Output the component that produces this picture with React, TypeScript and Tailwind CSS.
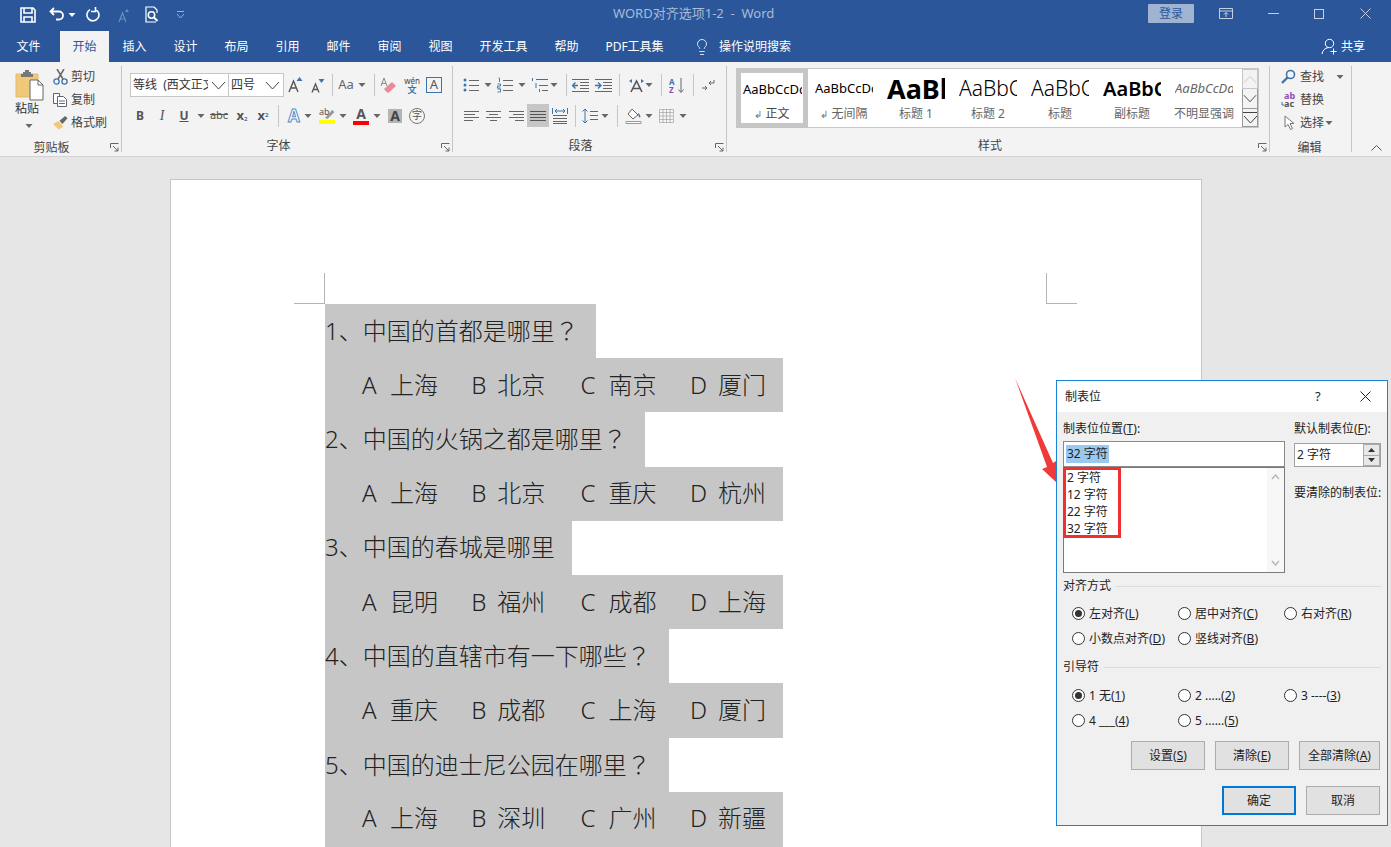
import React from 'react';
import { Lightbulb } from 'lucide-react';

const tabs = [
  ['文件', 'w-[60px]'],
  ['开始', 'w-[49px]'],
  ['插入', 'w-[51px]'],
  ['设计', 'w-[51px]'],
  ['布局', 'w-[51px]'],
  ['引用', 'w-[51px]'],
  ['邮件', 'w-[51px]'],
  ['审阅', 'w-[51px]'],
  ['视图', 'w-[51px]'],
  ['开发工具', 'w-[75px]'],
  ['帮助', 'w-[51px]'],
  ['PDF工具集', 'w-[85px]'],
];

const questions = [
  { q: '1、中国的首都是哪里', mark: true, w: 'w-[271px]', opts: ['上海', '北京', '南京', '厦门'] },
  { q: '2、中国的火锅之都是哪里', mark: true, w: 'w-[320px]', opts: ['上海', '北京', '重庆', '杭州'] },
  { q: '3、中国的春城是哪里', mark: false, w: 'w-[247px]', opts: ['昆明', '福州', '成都', '上海'] },
  { q: '4、中国的直辖市有一下哪些', mark: true, w: 'w-[344px]', opts: ['重庆', '成都', '上海', '厦门'] },
  { q: '5、中国的迪士尼公园在哪里', mark: true, w: 'w-[344px]', opts: ['上海', '深圳', '广州', '新疆'] },
];

const optionLetters = [
  ['A', 'w-[28px]'],
  ['B', 'w-[26px]'],
  ['C', 'w-[28px]'],
  ['D', 'w-[28px]'],
];

const styles = [
  { name: '无间隔', mark: true, cls: 'text-[13px] text-black', sample: 'AaBbCcDd' },
  { name: '标题 1', cls: 'text-[27px] font-bold text-black', sample: 'AaBbC' },
  { name: '标题 2', cls: 'text-[21px] font-light text-black', sample: 'AaBbCc' },
  { name: '标题', cls: 'text-[21px] font-light text-black', sample: 'AaBbCc' },
  { name: '副标题', cls: 'text-[20px] font-semibold text-black', sample: 'AaBbCc' },
  { name: '不明显强调', cls: 'text-[13px] italic text-[#666]', sample: 'AaBbCcDd' },
];

const Caret = ({ className = '' }: { className?: string }) => (
  <svg width="8" height="4" viewBox="0 0 8 4" className={`shrink-0 ${className}`}>
    <path d="M0.5 0h7L4 4z" fill="#666" />
  </svg>
);

const Sep = ({ className = '' }: { className?: string }) => (
  <div className={`w-px h-[22px] bg-[#c6c6c6] shrink-0 ${className}`} />
);

const Launcher = () => (
  <svg width="9" height="9" viewBox="0 0 9 9" className="absolute right-[2px] bottom-[0px]">
    <path d="M0.5 5V0.5H8.5M3 3l5 5M8 4.5V8H4.5" fill="none" stroke="#666" />
  </svg>
);

const Chevron = ({ up = false, className = '' }: { up?: boolean; className?: string }) => (
  <svg width="15" height="9" viewBox="0 0 15 9" className={className}>
    <path d={up ? 'M1 8l6.5-7 6.5 7' : 'M1 1l6.5 7 6.5-7'} fill="none" stroke="currentColor" />
  </svg>
);

// paragraph lines, each [x1, x2, y]
const Lines = ({ rows, color = '#666' }: { rows: number[][]; color?: string }) => (
  <svg width="20" height="16" viewBox="0 0 20 16">
    {rows.map((r, i) => (
      <path key={i} d={`M${r[0]} ${r[2]}.5H${r[1]}`} stroke={color} />
    ))}
  </svg>
);

const Cell = ({ className = 'w-[20px]', children }: { className?: string; children?: React.ReactNode }) => (
  <div className={`h-full flex items-center justify-center shrink-0 ${className}`}>{children}</div>
);

const Radio = ({ on, label, cls }: { on?: boolean; label: React.ReactNode; cls: string }) => (
  <div className={`flex items-center ${cls}`}>
    <div className="w-[13px] h-[13px] rounded-full border border-[#333] bg-white flex items-center justify-center shrink-0">
      {on && <div className="w-[7px] h-[7px] rounded-full bg-[#333]" />}
    </div>
    <span className="ml-[4px] whitespace-nowrap">{label}</span>
  </div>
);

const DlgButton = ({ cls, children }: { cls: string; children: React.ReactNode }) => (
  <div className={`h-[29px] border border-[#adadad] bg-[#e1e1e1] flex items-center justify-center ${cls}`}>{children}</div>
);

const U = ({ children }: { children: React.ReactNode }) => <span className="underline">{children}</span>;

const ToolText = ({ children }: { children: React.ReactNode }) => (
  <span className="text-[12px] text-[#444] whitespace-nowrap">{children}</span>
);

export default function App() {
  return (
    <div className="relative w-full h-screen overflow-hidden flex flex-col bg-[#e6e6e6] text-[12px] [font-family:'Noto_Sans','Noto_Sans_CJK_SC',sans-serif]">
      {/* title bar */}
      <div className="h-[31px] bg-[#2b579a] flex items-center shrink-0 text-white pb-[2px]">
        <div className="flex items-center pl-[20px] w-[613px]">
          <svg width="16" height="16" viewBox="0 0 16 16">
            <path d="M1 1h12l2 2v12H1z" fill="none" stroke="#fff" strokeWidth="1.6" />
            <path d="M4 1v5h8V1M4 15v-5h8v5" fill="none" stroke="#fff" strokeWidth="1.6" />
          </svg>
          <svg width="17" height="15" viewBox="0 0 17 15" className="ml-[13px]">
            <path d="M5 1L1.5 4.5 5 8M2 4.5h8a4 4 0 0 1 0 8H7" fill="none" stroke="#fff" strokeWidth="1.8" />
          </svg>
          <Caret className="ml-[2px] [&>path]:fill-white" />
          <svg width="15" height="15" viewBox="0 0 15 15" className="ml-[10px]">
            <path d="M9 2.2A6 6 0 1 1 4 2.6M9.5 0v4.5H5" fill="none" stroke="#fff" strokeWidth="1.6" />
          </svg>
          <svg width="11" height="14" viewBox="0 0 11 14" className="ml-[17px] mt-[2px]">
            <path d="M1 13L4.5 4 8 13M2.2 10h4.6" fill="none" stroke="#6f8dbb" strokeWidth="1.2" />
            <path d="M7 3h4L9 0z" fill="#6f8dbb" />
          </svg>
          <svg width="15" height="17" viewBox="0 0 15 17" className="ml-[15px]">
            <path d="M10 1H2v15h10M10 1l3 3v3" fill="none" stroke="#fff" strokeWidth="1.2" />
            <circle cx="7.5" cy="9" r="3.2" fill="none" stroke="#fff" strokeWidth="1.5" />
            <path d="M10 11.5l3.5 3.5" stroke="#fff" strokeWidth="2" />
          </svg>
          <svg width="9" height="8" viewBox="0 0 9 8" className="ml-[17px]">
            <path d="M1 .5h7M1 3l3.5 4L8 3" fill="none" stroke="#9db2d2" />
          </svg>
        </div>
        <span className="text-[13px] text-[#a9bbd6] whitespace-pre mb-[2px]">WORD对齐选项1-2  -  Word</span>
        <div className="ml-auto flex items-center h-full mb-[2px]">
          <div className="w-[46px] h-[19px] bg-[#a0b4d1] rounded-[1px] text-[#2b579a] text-[12px] flex items-center justify-center">登录</div>
          <svg width="14" height="11" viewBox="0 0 14 11" className="ml-[25px]">
            <path d="M.5.5h13v10H.5zM.5 3h13M7 9V4.5M5 6.5l2-2 2 2" fill="none" stroke="#c4d0e3" />
          </svg>
          <div className="ml-[35px] w-[11px] h-px bg-[#c4d0e3]" />
          <div className="ml-[35px] w-[10px] h-[10px] border border-[#c4d0e3]" />
          <svg width="11" height="11" viewBox="0 0 11 11" className="ml-[36px] mr-[20px]">
            <path d="M.5.5l10 10M10.5.5l-10 10" stroke="#c4d0e3" />
          </svg>
        </div>
      </div>

      {/* tabs */}
      <div className="h-[31px] bg-[#2b579a] flex items-stretch shrink-0 text-white text-[12px]">
        {tabs.map(([label, w]) => (
          <div
            key={label}
            className={`${w} flex items-center justify-center ${label === '开始' ? 'bg-[#f3f3f3] text-[#2b579a]' : ''} ${label === '文件' ? 'pr-[3px]' : ''}`}
          >
            {label}
          </div>
        ))}
        <div className="flex items-center ml-[16px] text-white">
          <Lightbulb size={18} strokeWidth={1.1} />
          <span className="ml-[8px]">操作说明搜索</span>
        </div>
        <div className="ml-auto flex items-center pr-[26px]">
          <svg width="17" height="17" viewBox="0 0 17 17">
            <circle cx="8.5" cy="5.5" r="4.2" fill="none" stroke="#fff" />
            <path d="M1 16c.5-3.5 3-6 6-6.4" fill="none" stroke="#fff" />
            <path d="M12.5 10.5v6M9.5 13.5h6" stroke="#fff" />
          </svg>
          <span className="ml-[3px]">共享</span>
        </div>
      </div>

      {/* ribbon */}
      <div className="h-[95px] bg-[#f3f3f3] border-b border-[#d2d2d2] flex shrink-0 py-[4px] text-[#444]">
        {/* clipboard */}
        <div className="relative w-[122px] shrink-0 border-r border-[#c6c6c6] flex flex-col">
          <div className="flex-1 flex">
            <div className="w-[53px] flex flex-col items-start pt-[4px] pl-[15px]">
              <svg width="29" height="31" viewBox="0 0 29 31">
                <path d="M1 4h22v23H1z" fill="#f0c87a" stroke="#e5bb6c" />
                <path d="M8 4V2h2V0h4v2h2v2h2v3H6V4z" fill="#777" />
                <path d="M15 10h8l5 5v15H15z" fill="#fff" stroke="#666" />
                <path d="M23 10v5h5" fill="none" stroke="#666" />
              </svg>
              <span className="text-[12px] text-[#333] leading-[16px]">粘贴</span>
              <Caret className="mt-[7px] ml-[10px]" />
            </div>
            <div className="flex flex-col -mt-[1px]">
              {[
                ['剪切', <svg key="s" width="15" height="16" viewBox="0 0 15 16"><circle cx="3.5" cy="12.5" r="2.6" fill="none" stroke="#3e74ad" strokeWidth="1.3" /><circle cx="11.5" cy="12.5" r="2.6" fill="none" stroke="#3e74ad" strokeWidth="1.3" /><path d="M5 10L11 0M10 10L4 0" stroke="#666" strokeWidth="1.5" /></svg>],
                ['复制', <svg key="c" width="15" height="15" viewBox="0 0 15 15"><path d="M.5 1.5h6v10h-6z" fill="#fff" stroke="#666" /><path d="M4.5 4.5h6l3 3v7h-9z" fill="#fff" stroke="#666" /><path d="M6 9h6M6 11.5h6" stroke="#3e74ad" /></svg>],
                ['格式刷', <svg key="f" width="16" height="15" viewBox="0 0 16 15"><path d="M0 9l6-3 5 6-5 3z" fill="#f0c87a" /><path d="M7 5.5l6-5 2.5 2.5-5.5 6z" fill="#666" /></svg>],
              ].map(([label, icon], i) => (
                <div key={i} className="h-[23px] flex items-center">
                  <Cell className="w-[15px]">{icon}</Cell>
                  <span className="ml-[3px] text-[#444] whitespace-nowrap">{label}</span>
                </div>
              ))}
            </div>
          </div>
          <div className="h-[20px] leading-[28px] text-center pr-[18px] text-[#444]">剪贴板</div>
          <Launcher />
        </div>

        {/* font */}
        <div className="relative w-[331px] shrink-0 border-r border-[#c6c6c6] flex flex-col">
          <div className="flex-1 pl-[8px] pt-[7px]">
            <div className="h-[24px] flex items-center">
              <div className="w-[99px] h-full bg-white border border-[#c6c6c6] flex items-center pl-[2px] overflow-hidden">
                <span className="w-[75px] overflow-hidden whitespace-pre text-[#333]">等线  (西文正文)</span>
                <Chevron className="ml-[3px] text-[#444] shrink-0" />
              </div>
              <div className="w-[55px] h-full bg-white border border-l-0 border-[#c6c6c6] flex items-center pl-[2px]">
                <span className="text-[#333]">四号</span>
                <Chevron className="ml-[10px] text-[#444]" />
              </div>
              <Cell className="w-[22px] ml-[1px]">
                <svg width="16" height="16" viewBox="0 0 16 16"><path d="M1 15L5.5 4 10 15M2.8 11h5.4" fill="none" stroke="#555" strokeWidth="1.4" /><path d="M8.5 4h6L11.5 0z" fill="#3e74ad" /></svg>
              </Cell>
              <Cell className="w-[22px]">
                <svg width="14" height="15" viewBox="0 0 14 15"><path d="M1 14.5L4.5 6 8 14.5M2.3 11.5h4.4" fill="none" stroke="#555" strokeWidth="1.3" /><path d="M7.5 1h6l-3 4z" fill="#3e74ad" /></svg>
              </Cell>
              <Sep className="ml-[3px]" />
              <Cell className="w-[20px] ml-[3px]"><span className="text-[13px] text-[#666]">Aa</span></Cell>
              <Caret className="ml-[2px]" />
              <Sep className="ml-[8px]" />
              <Cell className="w-[20px] ml-[3px]">
                <svg width="17" height="17" viewBox="0 0 17 17"><path d="M1 9l3-8 3 8M2 6.5h4" fill="none" stroke="#888" /><path d="M4 12l8-7 4 4-7 6.5H7z" fill="#ea8a97" /></svg>
              </Cell>
              <Cell className="w-[22px] ml-[3px] flex-col leading-none">
                <span className="text-[8px] text-[#444] leading-[9px]">wén</span>
                <span className="text-[9px] font-bold text-[#3e74ad] leading-[10px]">文</span>
              </Cell>
              <Cell className="w-[20px] ml-[1px]">
                <span className="w-[16px] h-[16px] border border-[#3e74ad] flex items-center justify-center text-[13px] text-[#555]">A</span>
              </Cell>
            </div>
            <div className="h-[23px] mt-[7px] flex items-center text-[#555]">
              <Cell className="w-[20px]"><b className="text-[12px]">B</b></Cell>
              <Cell className="w-[20px] ml-[2px]"><i className="text-[14px] [font-family:'Liberation_Serif',serif]">I</i></Cell>
              <Cell className="w-[20px] ml-[2px]"><b className="text-[12px] underline">U</b></Cell>
              <Caret className="ml-[3px]" />
              <Cell className="w-[20px] ml-[4px]"><span className="text-[11px] line-through">abc</span></Cell>
              <Cell className="w-[20px] ml-[3px]"><b className="text-[13px]">x<sub className="text-[6px] text-[#3e74ad]">2</sub></b></Cell>
              <Cell className="w-[20px] ml-[1px]"><b className="text-[13px]">x<sup className="text-[6px] text-[#3e74ad]">2</sup></b></Cell>
              <Sep className="ml-[5px]" />
              <Cell className="w-[20px] ml-[5px]"><b className="text-[17px] text-[#f7fbff] [-webkit-text-stroke:1px_#5b8fc7]">A</b></Cell>
              <Caret />
              <Cell className="w-[20px] ml-[5px] flex-col">
                <svg width="16" height="17" viewBox="0 0 16 17"><text x="0" y="8" fontSize="9" fill="#555">ab</text><path d="M6 11l7-8 2.5 2-7 7z" fill="#999" /><path d="M0 13h16v4H0z" fill="#ffff00" /></svg>
              </Cell>
              <Caret className="ml-[2px]" />
              <Cell className="w-[20px] ml-[4px] flex-col leading-none">
                <b className="text-[14px] text-[#555] leading-[13px]">A</b>
                <span className="w-[16px] h-[4px] bg-[#ff0000] mt-[1px]" />
              </Cell>
              <Caret className="ml-[2px]" />
              <Cell className="w-[20px] ml-[4px]">
                <span className="w-[14px] h-[14px] bg-[#b4b4b4] flex items-center justify-center text-[14px] font-bold text-[#444]">A</span>
              </Cell>
              <Cell className="w-[20px] ml-[2px]">
                <span className="w-[16px] h-[16px] rounded-full border border-[#777] flex items-center justify-center text-[10px] text-[#555]">字</span>
              </Cell>
            </div>
          </div>
          <div className="h-[20px] leading-[28px] text-center pr-[17px]">字体</div>
          <Launcher />
        </div>

        {/* paragraph */}
        <div className="relative w-[274px] shrink-0 border-r border-[#c6c6c6] flex flex-col">
          <div className="flex-1 pl-[8px] pt-[7px]">
            <div className="h-[24px] flex items-center">
              <Cell>
                <svg width="16" height="16" viewBox="0 0 16 16"><path d="M6 3.5h10M6 8.5h10M6 13.5h10" stroke="#666" /><circle cx="2" cy="3" r="1.5" fill="#3e74ad" /><circle cx="2" cy="8" r="1.5" fill="#3e74ad" /><circle cx="2" cy="13" r="1.5" fill="#3e74ad" /></svg>
              </Cell>
              <Caret className="ml-[3px]" />
              <Cell className="w-[20px] ml-[3px]">
                <svg width="16" height="16" viewBox="0 0 16 16"><path d="M6 3.5h10M6 8.5h10M6 13.5h10" stroke="#666" /><path d="M1.5 1h1v4M.5 7h3v2h-3v2h3M.5 12h3v3h-3" fill="none" stroke="#3e74ad" strokeWidth=".9" /></svg>
              </Cell>
              <Caret className="ml-[3px]" />
              <Cell className="w-[20px] ml-[4px]">
                <svg width="18" height="16" viewBox="0 0 18 16"><path d="M5 2.5h12M8 8.5h9M11 13.5h6" stroke="#666" /><path d="M1.5 1v3M5 6v5M8.5 12v3" stroke="#3e74ad" /></svg>
              </Cell>
              <Caret />
              <Sep className="ml-[8px]" />
              <Cell className="w-[20px] ml-[3px]">
                <svg width="17" height="14" viewBox="0 0 17 14"><path d="M0 1.5h17M8 4.5h9M8 7.5h9M8 10.5h9M0 13.5h17" stroke="#666" /><path d="M6 7.5H1M3.5 4.5L.5 7.5l3 3" fill="none" stroke="#3e74ad" strokeWidth="1.4" /></svg>
              </Cell>
              <Cell className="w-[20px] ml-[3px]">
                <svg width="17" height="14" viewBox="0 0 17 14"><path d="M0 1.5h17M8 4.5h9M8 7.5h9M8 10.5h9M0 13.5h17" stroke="#666" /><path d="M0 7.5h5M3 4.5l3 3-3 3" fill="none" stroke="#3e74ad" strokeWidth="1.4" /></svg>
              </Cell>
              <Sep className="ml-[6px]" />
              <Cell className="w-[20px] ml-[6px]">
                <svg width="17" height="15" viewBox="0 0 17 15"><path d="M3 14L8.5 3 14 14M5 10.5h7" fill="none" stroke="#555" strokeWidth="1.6" /><path d="M1 3l3-2v4zM16 3l-3-2v4z" fill="#3e74ad" /></svg>
              </Cell>
              <Caret className="-ml-[1px]" />
              <Sep className="ml-[8px]" />
              <Cell className="w-[20px] ml-[5px]">
                <svg width="16" height="17" viewBox="0 0 16 17"><text x="0" y="8" fontSize="8" fontWeight="700" fill="#3e74ad">A</text><text x="0" y="16" fontSize="8" fontWeight="700" fill="#8a4fb0">Z</text><path d="M12 1v14M9.5 12.5L12 15.5l2.5-3" fill="none" stroke="#666" /></svg>
              </Cell>
              <Sep className="ml-[6px]" />
              <Cell className="w-[20px] ml-[4px]">
                <svg width="14" height="13" viewBox="0 0 14 13"><path d="M13 1v3H8M10 2L8 4l2 2" fill="none" stroke="#666" /><path d="M1 9h5M4 7l2 2-2 2" fill="none" stroke="#666" /></svg>
              </Cell>
            </div>
            <div className="h-[23px] mt-[7px] flex items-center">
              <Cell className="w-[20px] ml-[1px]"><Lines rows={[[2, 17, 3], [2, 13, 6], [2, 17, 9], [2, 11, 12]]} /></Cell>
              <Cell className="w-[20px] ml-[2px]"><Lines rows={[[2, 17, 3], [5, 14, 6], [2, 17, 9], [6, 13, 12]]} /></Cell>
              <Cell className="w-[20px] ml-[2px]"><Lines rows={[[3, 18, 3], [7, 18, 6], [3, 18, 9], [9, 18, 12]]} /></Cell>
              <Cell className="w-[22px] ml-[1px] bg-[#c6c6c6]"><Lines rows={[[2, 18, 3], [2, 18, 6], [2, 18, 9], [2, 18, 12]]} color="#555" /></Cell>
              <Cell className="w-[20px] ml-[1px]">
                <svg width="16" height="16" viewBox="0 0 16 16"><path d="M.5 0v6M15.5 0v6M3 3h10M5 1L3 3l2 2M11 1l2 2-2 2" fill="none" stroke="#3e74ad" /><path d="M1 7.5h14M1 10.5h14M1 13.5h14M1 15.5h14" stroke="#666" /></svg>
              </Cell>
              <Sep className="ml-[5px]" />
              <Cell className="w-[20px] ml-[4px]">
                <svg width="16" height="16" viewBox="0 0 16 16"><path d="M8 3.5h8M8 7.5h8M8 11.5h8" stroke="#666" /><path d="M3 1v14M.5 3.5L3 1l2.5 2.5M.5 12.5L3 15l2.5-2.5" fill="none" stroke="#3e74ad" /></svg>
              </Cell>
              <Caret className="ml-[1px]" />
              <Sep className="ml-[8px]" />
              <Cell className="w-[20px] ml-[5px]">
                <svg width="17" height="16" viewBox="0 0 17 16"><path d="M7 1l6 6-5 4-5-5z" fill="#fff" stroke="#666" /><path d="M13 5c2 1 3 3 2 5-1-1-2-3-2-5z" fill="#3e74ad" /><path d="M1 13.5h15v2H1z" fill="#fff" stroke="#999" /></svg>
              </Cell>
              <Caret className="ml-[2px]" />
              <Cell className="w-[20px] ml-[3px]">
                <svg width="15" height="14" viewBox="0 0 15 14"><path d="M.5.5h14v13H.5zM7.5.5v13M.5 7h14M.5 3.5h14M.5 10.5h14M4 .5v13M11 .5v13" fill="none" stroke="#888" strokeDasharray="1 1" /></svg>
              </Cell>
              <Caret className="ml-[3px]" />
            </div>
          </div>
          <div className="h-[20px] leading-[28px] text-center pr-[18px]">段落</div>
          <Launcher />
        </div>

        {/* styles */}
        <div className="relative w-[543px] shrink-0 border-r border-[#c6c6c6] flex flex-col">
          <div className="flex-1 pl-[9px] pt-[2px]">
            <div className="w-[523px] h-[60px] flex bg-white border border-[#c6c6c6]">
              <div className="w-[72px] h-[60px] border-[5px] border-[#c6c6c6] flex flex-col items-center overflow-hidden shrink-0 -my-px -ml-px">
                <div className="w-[60px] h-[33px] overflow-hidden whitespace-nowrap text-[13px] text-black leading-[32px] pl-[1px]">AaBbCcDd</div>
                <div className="text-[12px] text-[#444] leading-[16px]"><span className="text-[10px] text-[#777] mr-[3px]">↲</span>正文</div>
              </div>
              {styles.map(s => (
                <div key={s.name} className="w-[72px] h-full flex flex-col shrink-0 items-center overflow-hidden">
                  <div className={`w-[58px] h-[36px] pt-[4px] overflow-hidden whitespace-nowrap flex items-center ${s.cls}`}>{s.sample}</div>
                  <div className="text-[12px] text-[#666] whitespace-nowrap leading-[18px]">
                    {s.mark && <span className="text-[10px] text-[#777] mr-[3px]">↲</span>}
                    {s.name}
                  </div>
                </div>
              ))}
              <div className="ml-auto w-[16px] h-full flex flex-col bg-[#f3f3f3] text-[#444]">
                <div className="h-[20px] border border-[#c6c6c6] flex items-center justify-center text-[#c6c6c6]"><Chevron up /></div>
                <div className="h-[20px] border border-t-0 border-[#999] flex items-center justify-center"><Chevron /></div>
                <div className="h-[18px] border border-t-0 border-[#999] flex flex-col items-center justify-center"><div className="w-full h-px bg-[#444] mb-[2px]" /><Chevron /></div>
              </div>
            </div>
          </div>
          <div className="h-[20px] leading-[28px] text-center pr-[16px]">样式</div>
          <Launcher />
        </div>

        {/* editing */}
        <div className="relative w-[82px] shrink-0 border-r border-[#c6c6c6] flex flex-col">
          <div className="flex-1 pl-[11px]">
            <div className="h-[23px] flex items-center mt-[-1px]">
              <svg width="15" height="15" viewBox="0 0 15 15"><circle cx="9.5" cy="5.5" r="4" fill="none" stroke="#3e74ad" strokeWidth="1.6" /><path d="M6.5 8.5L1 14" stroke="#3e74ad" strokeWidth="2.4" /></svg>
              <span className="ml-[4px]"><ToolText>查找</ToolText></span>
              <Caret className="ml-[12px]" />
            </div>
            <div className="h-[23px] flex items-center">
              <svg width="16" height="16" viewBox="0 0 16 16"><text x="3" y="7" fontSize="9" fontWeight="700" fill="#8a4fb0">ab</text><text x="3" y="15" fontSize="9" fontWeight="700" fill="#555">ac</text><path d="M1 10v3h2" fill="none" stroke="#3e74ad" /></svg>
              <span className="ml-[3px]"><ToolText>替换</ToolText></span>
            </div>
            <div className="h-[23px] flex items-center">
              <svg width="15" height="16" viewBox="0 0 15 16" className="ml-[1px]"><path d="M3 1v11l3-2.5 2.5 5 2-1-2.5-5H12z" fill="#fff" stroke="#777" /></svg>
              <span className="ml-[3px]"><ToolText>选择</ToolText></span>
              <Caret className="ml-[1px]" />
            </div>
          </div>
          <div className="h-[20px] leading-[28px] text-center pr-[2px]">编辑</div>
        </div>

        <div className="flex-1 flex items-end justify-end pr-[9px] pb-[1px] text-[#555]">
          <svg width="11" height="6" viewBox="0 0 11 6"><path d="M.5 5.5L5.5.5l5 5" fill="none" stroke="currentColor" /></svg>
        </div>
      </div>

      {/* document area */}
      <div className="flex-1 min-h-0 pt-[22px] pl-[170px] overflow-hidden">
        <div className="w-[1032px] h-[700px] bg-white border border-[#c6c6c6] pt-[93px]">
          <div className="h-[30px] flex pl-[123px]">
            <div className="w-[31px] h-[31px] border-r border-b border-[#b4b4b4]" />
            <div className="w-[721px]" />
            <div className="w-[31px] h-[31px] border-l border-b border-[#b4b4b4]" />
          </div>
          <div className="pl-[154px] pt-px text-[24px] text-[#222] font-light">
            {questions.map(item => (
              <React.Fragment key={item.q}>
                <div className={`${item.w} h-[54.2px] bg-[#c6c6c6] leading-[51px] whitespace-nowrap`}>
                  {item.q}
                  {item.mark && <span className="[font-family:'Noto_Sans_CJK_TC',sans-serif]">？</span>}
                </div>
                <div className="w-[458px] h-[54.2px] bg-[#c6c6c6] pl-[37px] pb-[1px] flex items-center whitespace-nowrap">
                  {item.opts.map((o, i) => (
                    <div key={i} className="w-[109.3px] flex shrink-0">
                      <span className={optionLetters[i][1]}>{optionLetters[i][0]}</span>
                      <span>{o}</span>
                    </div>
                  ))}
                </div>
              </React.Fragment>
            ))}
            <div className="w-[458px] h-[3px] bg-[#c6c6c6]" />
          </div>
        </div>
      </div>

      {/* red arrow annotation */}
      <svg className="absolute left-[1010px] top-[374px]" width="50" height="112" viewBox="0 0 50 112">
        <path d="M5 4L43 89L46 87L46 108L32 95L37 93Z" fill="#f03a3a" />
      </svg>

      {/* tab stops dialog */}
      <div className="absolute left-[1056px] top-[380px] w-[332px] h-[446px] bg-[#f0f0f0] border border-[#1883d7] text-[12px] text-[#222] flex flex-col">
        <div className="h-[31px] bg-white flex items-center pl-[8px] shrink-0">
          <span>制表位</span>
          <span className="ml-[214px] text-[13px]">?</span>
          <svg width="11" height="11" viewBox="0 0 11 11" className="ml-[39px]"><path d="M.5.5l10 10M10.5.5l-10 10" stroke="#222" /></svg>
        </div>
        <div className="flex pl-[6px] h-[162px] shrink-0">
          <div className="w-[222px] relative">
            <div className="h-[29px] pt-[9px] leading-[16px]">制表位位置(<U>T</U>):</div>
            <div className="h-[26px] bg-white border border-[#8a8a8a] flex items-center pl-[2px]">
              <span className="bg-[#99c9ef] px-px">32 字符</span>
            </div>
            <div className="h-[106px] bg-white border border-[#7a7a7a] flex">
              <div className="flex-1 pl-[3px] pt-[1px] leading-[17px]">
                <div>2 字符</div>
                <div>12 字符</div>
                <div>22 字符</div>
                <div>32 字符</div>
              </div>
              <div className="w-[17px] bg-[#f7f7f7] flex flex-col items-center justify-between py-[6px] text-[#b8b8b8]">
                <svg width="9" height="6" viewBox="0 0 9 6"><path d="M1 5l3.5-4L8 5" fill="none" stroke="currentColor" strokeWidth="1.5" /></svg>
                <svg width="9" height="6" viewBox="0 0 9 6"><path d="M1 1l3.5 4L8 1" fill="none" stroke="currentColor" strokeWidth="1.5" /></svg>
              </div>
            </div>
            {/* red annotation box */}
            <div className="absolute left-[0px] top-[55px] w-[58px] h-[71px] border-[3px] border-[#f03030]" />
          </div>
          <div className="ml-[9px] w-[90px]">
            <div className="h-[29px] pt-[9px] leading-[16px] whitespace-nowrap">默认制表位(<U>F</U>):</div>
            <div className="mt-[2px] w-[87px] h-[24px] bg-white border border-[#a0a0a0] flex items-center pl-[2px]">
              <span>2 字符</span>
              <div className="ml-auto w-[17px] h-full flex flex-col">
                <div className="flex-1 bg-[#e8e8e8] border border-[#aaa] flex items-center justify-center"><svg width="7" height="4" viewBox="0 0 7 4"><path d="M3.5 0L7 4H0z" fill="#333" /></svg></div>
                <div className="flex-1 bg-[#e8e8e8] border border-t-0 border-[#aaa] flex items-center justify-center"><svg width="7" height="4" viewBox="0 0 7 4"><path d="M0 0h7L3.5 4z" fill="#333" /></svg></div>
              </div>
            </div>
            <div className="mt-[17px] whitespace-nowrap">要清除的制表位:</div>
          </div>
        </div>

        <div className="flex items-center pl-[6px] pr-[6px] mt-[4px] h-[16px]">
          <span className="whitespace-nowrap">对齐方式</span>
          <div className="flex-1 h-px bg-[#dcdcdc] ml-[5px]" />
        </div>
        <div className="pl-[15px] mt-[7px] flex flex-wrap leading-[16px]">
          <Radio on cls="w-[106px] h-[25px]" label={<>左对齐(<U>L</U>)</>} />
          <Radio cls="w-[106px] h-[25px]" label={<>居中对齐(<U>C</U>)</>} />
          <Radio cls="w-[100px] h-[25px]" label={<>右对齐(<U>R</U>)</>} />
          <Radio cls="w-[106px] h-[25px]" label={<>小数点对齐(<U>D</U>)</>} />
          <Radio cls="w-[106px] h-[25px]" label={<>竖线对齐(<U>B</U>)</>} />
        </div>
        <div className="flex items-center pl-[6px] pr-[6px] mt-[8px] h-[16px]">
          <span className="whitespace-nowrap">引导符</span>
          <div className="flex-1 h-px bg-[#dcdcdc] ml-[5px]" />
        </div>
        <div className="pl-[15px] mt-[8px] flex flex-wrap leading-[16px]">
          <Radio on cls="w-[106px] h-[25px]" label={<>1 无(<U>1</U>)</>} />
          <Radio cls="w-[106px] h-[25px]" label={<>2 .....(<U>2</U>)</>} />
          <Radio cls="w-[100px] h-[25px]" label={<>3 ----(<U>3</U>)</>} />
          <Radio cls="w-[106px] h-[25px]" label={<>4 ___(<U>4</U>)</>} />
          <Radio cls="w-[106px] h-[25px]" label={<>5 ......(<U>5</U>)</>} />
        </div>
        <div className="flex justify-end pr-[7px] mt-[8px] gap-[10px]">
          <DlgButton cls="w-[74px]"><>设置(<U>S</U>)</></DlgButton>
          <DlgButton cls="w-[74px]"><>清除(<U>E</U>)</></DlgButton>
          <DlgButton cls="w-[81px]"><>全部清除(<U>A</U>)</></DlgButton>
        </div>
        <div className="flex justify-end pr-[7px] mt-[16px] gap-[10px]">
          <DlgButton cls="w-[74px] !border-2 !border-[#0078d7]">确定</DlgButton>
          <DlgButton cls="w-[74px]">取消</DlgButton>
        </div>
      </div>
    </div>
  );
}
